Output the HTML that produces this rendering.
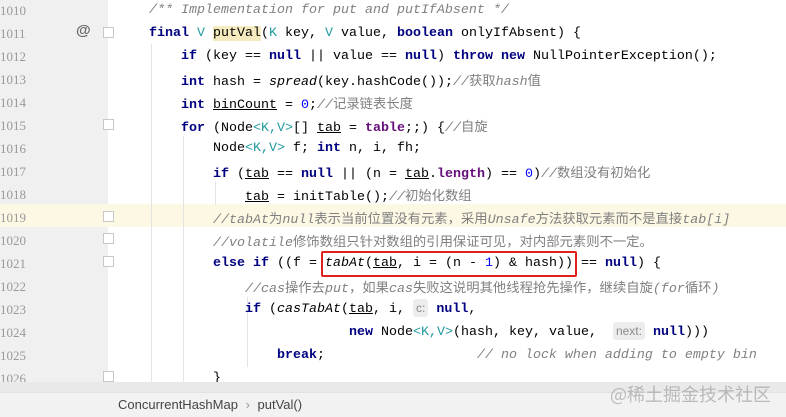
<!DOCTYPE html>
<html><head><meta charset="utf-8"><style>
body{margin:0;width:786px;height:416px;overflow:hidden;background:#fff;position:relative;font-family:"Liberation Mono","Noto Sans CJK SC",monospace;}
.g{position:absolute;left:0;top:0;width:108px;height:392px;background:#f0f0f0;}
.ln{position:absolute;left:0;width:60px;font:13px "Liberation Serif","DejaVu Serif",serif;color:#999;line-height:23px;}
.l{position:absolute;left:149px;font-size:13.33px;line-height:23px;white-space:pre;color:#000;}
.k{color:#000080;font-weight:bold}
.t{color:#20999d}
.c{color:#808080;font-style:italic}
.cc{color:#808080;font-family:"Noto Sans CJK SC",sans-serif;font-style:normal}
.n{color:#0000ff}
.f{color:#660e7a;font-weight:bold}
.i{font-style:italic}
.u{text-decoration:underline}
.h{background:#ededed;color:#8a8a8a;font:12px "Liberation Sans",sans-serif;padding:2px 3px;border-radius:3px}
.vg{position:absolute;width:1px;background:#e4e4e4}
.fold{position:absolute;left:103px;width:11px;height:11px;border:1px solid #c8c8c8;background:#fff;box-sizing:border-box}
</style></head><body>
<div class="g"></div>
<div style="position:absolute;left:0;top:204px;width:786px;height:23px;background:#fdf8e4"></div>
<div class="vg" style="left:151px;top:44px;height:338px"></div>
<div class="vg" style="left:183px;top:136px;height:246px"></div>
<div class="vg" style="left:215px;top:182px;height:23px"></div>
<div class="vg" style="left:247px;top:297px;height:70px"></div>
<div class="fold" style="top:27px"></div>
<div class="fold" style="top:119px"></div>
<div class="fold" style="top:211px"></div>
<div class="fold" style="top:233px"></div>
<div class="fold" style="top:256px"></div>
<div class="fold" style="top:371px"></div>
<div style="position:absolute;left:76px;top:22px;font:bold 15px 'Liberation Sans',sans-serif;color:#666">@</div>
<div class="ln" style="top:-1px">1010</div>
<div class="ln" style="top:22px">1011</div>
<div class="ln" style="top:45px">1012</div>
<div class="ln" style="top:68px">1013</div>
<div class="ln" style="top:91px">1014</div>
<div class="ln" style="top:114px">1015</div>
<div class="ln" style="top:137px">1016</div>
<div class="ln" style="top:160px">1017</div>
<div class="ln" style="top:183px">1018</div>
<div class="ln" style="top:206px">1019</div>
<div class="ln" style="top:229px">1020</div>
<div class="ln" style="top:252px">1021</div>
<div class="ln" style="top:275px">1022</div>
<div class="ln" style="top:298px">1023</div>
<div class="ln" style="top:321px">1024</div>
<div class="ln" style="top:344px">1025</div>
<div class="ln" style="top:367px">1026</div>

<div class="l" style="top:-1px"><span class="c">/** Implementation for put and putIfAbsent */</span></div>
<div class="l" style="top:22px"><span class="k">final</span> <span class="t">V</span> <span style="background:#f5ebbe">putVal</span>(<span class="t">K</span> key, <span class="t">V</span> value, <span class="k">boolean</span> onlyIfAbsent) {</div>
<div class="l" style="top:45px">    <span class="k">if</span> (key == <span class="k">null</span> || value == <span class="k">null</span>) <span class="k">throw new</span> NullPointerException();</div>
<div class="l" style="top:68px">    <span class="k">int</span> hash = <span class="i">spread</span>(key.hashCode());<span class="c">//</span><span class="cc">获取</span><span class="c">hash</span><span class="cc">值</span></div>
<div class="l" style="top:91px">    <span class="k">int</span> <span class="u">binCount</span> = <span class="n">0</span>;<span class="c">//</span><span class="cc">记录链表长度</span></div>
<div class="l" style="top:114px">    <span class="k">for</span> (Node<span class="t">&lt;K,V&gt;</span>[] <span class="u">tab</span> = <span class="f">table</span>;;) {<span class="c">//</span><span class="cc">自旋</span></div>
<div class="l" style="top:137px">        Node<span class="t">&lt;K,V&gt;</span> f; <span class="k">int</span> n, i, fh;</div>
<div class="l" style="top:160px">        <span class="k">if</span> (<span class="u">tab</span> == <span class="k">null</span> || (n = <span class="u">tab</span>.<span class="f">length</span>) == <span class="n">0</span>)<span class="c">//</span><span class="cc">数组没有初始化</span></div>
<div class="l" style="top:183px">            <span class="u">tab</span> = initTable();<span class="c">//</span><span class="cc">初始化数组</span></div>
<div class="l" style="top:206px">        <span class="c">//tabAt</span><span class="cc">为</span><span class="c">null</span><span class="cc">表示当前位置没有元素，采用</span><span class="c">Unsafe</span><span class="cc">方法获取元素而不是直接</span><span class="c">tab[i]</span></div>
<div class="l" style="top:229px">        <span class="c">//volatile</span><span class="cc">修饰数组只针对数组的引用保证可见，对内部元素则不一定。</span></div>
<div class="l" style="top:252px">        <span class="k">else if</span> ((f = <span class="i">tabAt</span>(<span class="u">tab</span>, i = (n - <span class="n">1</span>) &amp; hash)) == <span class="k">null</span>) {</div>
<div class="l" style="top:275px">            <span class="c">//cas</span><span class="cc">操作去</span><span class="c">put</span><span class="cc">，如果</span><span class="c">cas</span><span class="cc">失败这说明其他线程抢先操作，继续自旋</span><span class="c">(for</span><span class="cc">循环</span><span class="c">)</span></div>
<div class="l" style="top:298px">            <span class="k">if</span> (<span class="i">casTabAt</span>(<span class="u">tab</span>, i, <span class="h">c:</span> <span class="k">null</span>,</div>
<div class="l" style="top:321px">                         <span class="k">new</span> Node<span class="t">&lt;K,V&gt;</span>(hash, key, value,  <span class="h">next:</span> <span class="k">null</span>)))</div>
<div class="l" style="top:344px">                <span class="k">break</span>;                   <span class="c">// no lock when adding to empty bin</span></div>
<div class="l" style="top:367px">        }</div>
<div style="position:absolute;left:321px;top:251px;width:252px;height:22px;border:2px solid #e0201b;border-radius:2px"></div>
<div style="position:absolute;left:0;top:382px;width:786px;height:10px;background:#e9e9e9"></div>
<div style="position:absolute;left:0;top:392px;width:786px;height:24px;background:#f2f2f2;border-top:1px solid #e2e2e2"></div>
<div style="position:absolute;left:118px;top:397px;font:13px 'Liberation Sans',sans-serif;color:#444">ConcurrentHashMap <span style="color:#999;margin:0 4px">›</span> putVal()</div>
<div style="position:absolute;left:610px;top:381px;font:18px 'Noto Sans CJK SC',sans-serif;color:rgba(150,150,150,0.6)">@稀土掘金技术社区</div>
</body></html>
